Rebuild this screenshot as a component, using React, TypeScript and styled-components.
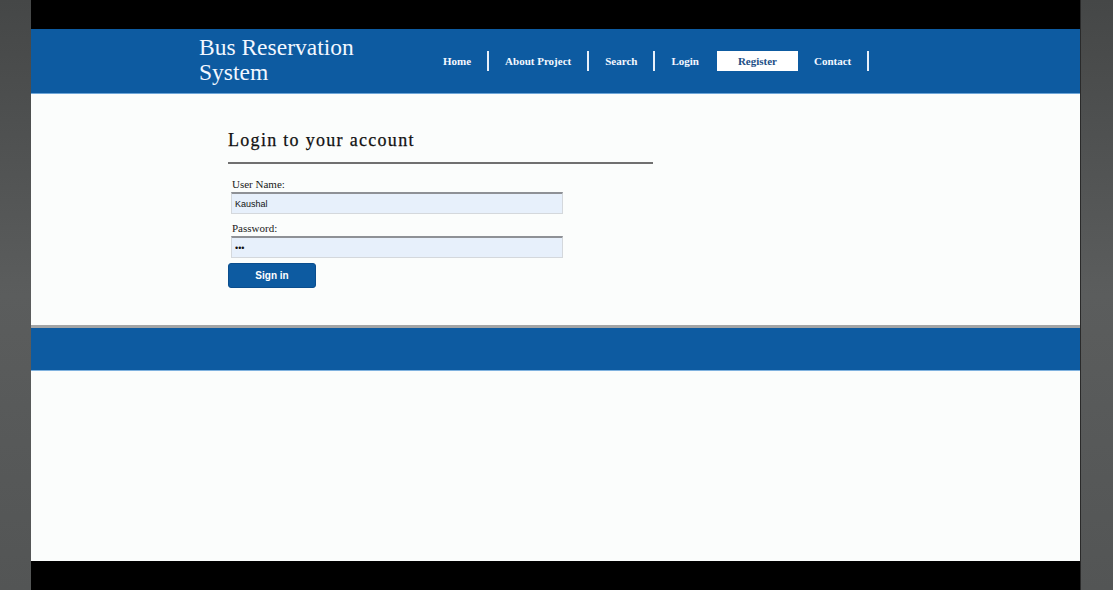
import React from "react";
import styled, { createGlobalStyle } from "styled-components";

const GlobalStyle = createGlobalStyle`
  html, body {
    margin: 0;
    padding: 0;
    background: #000;
  }
`;

const Screen = styled.div`
  display: flex;
  width: 1113px;
  height: 590px;
  overflow: hidden;
`;

const SideStrip = styled.div<{ $w: number }>`
  width: ${(p) => p.$w}px;
  flex-shrink: 0;
  background: linear-gradient(180deg, #454747 0%, #5b5d5d 50%, #535555 100%);
`;

const Frame = styled.div`
  flex: 1;
  display: flex;
  flex-direction: column;
  background: #fbfdfc;
  border-right: 1px solid #2a2a2a;
`;

const BlackBar = styled.div<{ $h: number }>`
  height: ${(p) => p.$h}px;
  background: #000;
  flex-shrink: 0;
`;

const Header = styled.header`
  height: 65px;
  background: #0d5ba1;
  display: flex;
  align-items: center;
  padding-left: 168px;
  border-bottom: 1px solid #6ea6d8;
  box-sizing: border-box;
`;

const Title = styled.h1`
  margin: -2px 0 0 0;
  width: 228px;
  font-family: "Liberation Serif", serif;
  font-weight: normal;
  font-size: 23.5px;
  line-height: 25px;
  color: #f2f7ff;
`;

const Nav = styled.nav`
  display: flex;
  align-items: center;
`;

const NavItem = styled.a<{ $active?: boolean; $divider?: boolean }>`
  display: block;
  height: 20px;
  line-height: 20px;
  padding: ${(p) => (p.$active ? "0 19px 0 21px" : "0 16px")};
  font-family: "Liberation Serif", serif;
  font-weight: bold;
  font-size: 11px;
  color: ${(p) => (p.$active ? "#1d4f86" : "#f4f8ff")};
  background: ${(p) => (p.$active ? "#ffffff" : "transparent")};
  border-right: 2px solid ${(p) => (p.$divider ? "#e8f0fa" : "transparent")};
  text-decoration: none;
  cursor: pointer;
`;

const Content = styled.main`
  height: 234px;
  padding: 36px 0 0 197px;
  box-sizing: border-box;
  border-bottom: 3px solid #a3a5a6;
`;

const LoginBox = styled.div`
  width: 425px;
`;

const Heading = styled.h2`
  margin: 0;
  font-family: "Liberation Serif", serif;
  font-weight: normal;
  font-size: 18px;
  letter-spacing: 1.3px;
  color: #111;
  -webkit-text-stroke: 0.25px #111;
  padding-bottom: 11px;
  border-bottom: 2px solid #707070;
`;

const Form = styled.form`
  display: flex;
  flex-direction: column;
  padding-top: 14px;
`;

const Label = styled.label`
  font-family: "Liberation Serif", serif;
  font-size: 11px;
  color: #1a1a1a;
  margin-left: 4px;
  line-height: 13px;
`;

const Input = styled.input`
  width: 332px;
  height: 22px;
  box-sizing: border-box;
  margin: 1px 0 8px 3px;
  padding: 0 3px;
  background: #e7f0fb;
  border: 1px solid #d4d8dc;
  border-top: 2px solid #8e9196;
  font-family: "Liberation Sans", sans-serif;
  font-size: 9px;
  color: #111;
  outline: none;
`;

const SignIn = styled.button`
  width: 88px;
  height: 25px;
  margin-top: -3px;
  background: #0d5ba1;
  border: 1px solid #0a4e8e;
  border-radius: 3px;
  color: #fff;
  font-family: "Liberation Sans", sans-serif;
  font-weight: bold;
  font-size: 10px;
  cursor: pointer;
`;

const Footer = styled.footer`
  height: 43px;
  background: #0d5ba1;
  border-bottom: 1px solid #7fb2df;
  box-sizing: border-box;
`;

const Blank = styled.div`
  flex: 1;
`;

const links = [
  { label: "Home", divider: true },
  { label: "About Project", divider: true },
  { label: "Search", divider: true },
  { label: "Login" },
  { label: "Register", active: true },
  { label: "Contact", divider: true },
];

export default function App() {
  return (
    <Screen>
      <GlobalStyle />
      <SideStrip $w={31} />
      <Frame>
        <BlackBar $h={29} />
        <Header>
          <Title>
            Bus Reservation
            <br />
            System
          </Title>
          <Nav>
            {links.map((l) => (
              <NavItem key={l.label} $active={l.active} $divider={l.divider}>
                {l.label}
              </NavItem>
            ))}
          </Nav>
        </Header>
        <Content>
          <LoginBox>
            <Heading>Login to your account</Heading>
            <Form onSubmit={(e) => e.preventDefault()}>
              <Label>User Name:</Label>
              <Input type="text" defaultValue="Kaushal" />
              <Label>Password:</Label>
              <Input type="password" defaultValue="abc" />
              <SignIn type="submit">Sign in</SignIn>
            </Form>
          </LoginBox>
        </Content>
        <Footer />
        <Blank />
        <BlackBar $h={29} />
      </Frame>
      <SideStrip $w={32} />
    </Screen>
  );
}
